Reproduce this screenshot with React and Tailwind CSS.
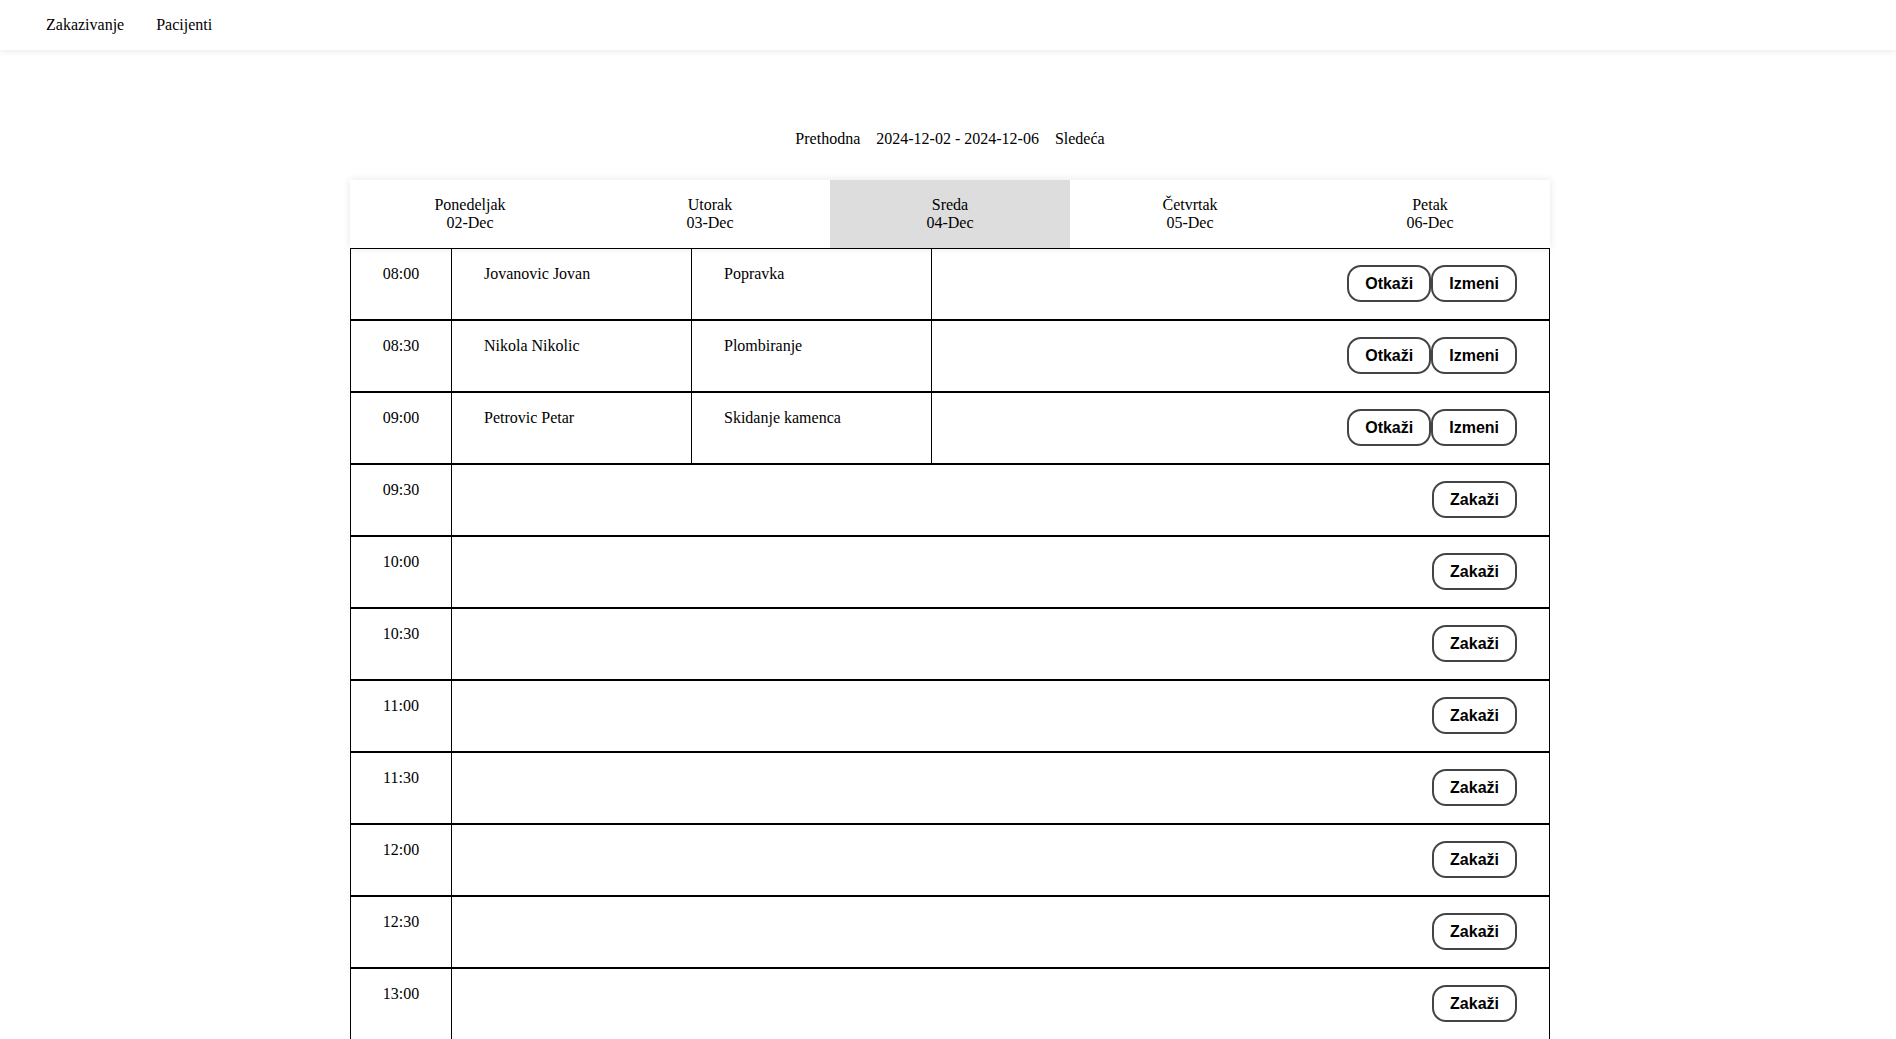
import { useState } from "react";

const days = [
  { name: "Ponedeljak", date: "02-Dec" },
  { name: "Utorak", date: "03-Dec" },
  { name: "Sreda", date: "04-Dec" },
  { name: "Četvrtak", date: "05-Dec" },
  { name: "Petak", date: "06-Dec" },
];

const appointments = {
  "08:00": { patient: "Jovanovic Jovan", service: "Popravka" },
  "08:30": { patient: "Nikola Nikolic", service: "Plombiranje" },
  "09:00": { patient: "Petrovic Petar", service: "Skidanje kamenca" },
};

const slots = [];
for (let h = 8; h < 16; h++) {
  const hh = String(h).padStart(2, "0");
  slots.push(`${hh}:00`, `${hh}:30`);
}

function Btn({ children }) {
  return (
    <button className="bg-white text-black font-bold text-[16px] leading-[19px] px-4 py-[7px] border-2 border-[#444] rounded-[14px] font-['Liberation_Sans',Arial,sans-serif]">
      {children}
    </button>
  );
}

function Row({ time }) {
  const appt = appointments[time];
  return (
    <div className="flex border border-black h-[72px]">
      <div className="w-[101px] shrink-0 border-r border-black pt-4 text-center">
        {time}
      </div>
      {appt ? (
        <>
          <div className="w-[240px] shrink-0 border-r border-black pt-4 pl-8">
            {appt.patient}
          </div>
          <div className="w-[240px] shrink-0 border-r border-black pt-4 pl-8">
            {appt.service}
          </div>
          <div className="flex-1 flex items-start justify-end pt-[16px] pr-[32px]">
            <Btn>Otkaži</Btn>
            <Btn>Izmeni</Btn>
          </div>
        </>
      ) : (
        <div className="flex-1 flex items-start justify-end pt-[16px] pr-[32px]">
          <Btn>Zakaži</Btn>
        </div>
      )}
    </div>
  );
}

export default function App() {
  const [selected] = useState(2);

  return (
    <div className="min-h-screen bg-white text-black text-[16px] leading-[18px] font-['Liberation_Serif','Times_New_Roman',serif]">
      <nav className="h-[50px] flex items-center gap-8 pl-[46px] shadow-[0_2px_6px_rgba(0,0,0,0.08)]">
        <a href="#">Zakazivanje</a>
        <a href="#">Pacijenti</a>
      </nav>

      <div className="pl-1">
        <div className="mt-20 flex justify-center gap-4">
          <a href="#">Prethodna</a>
          <span>2024-12-02 - 2024-12-06</span>
          <a href="#">Sledeća</a>
        </div>

        <div className="w-[1200px] mx-auto mt-8 pb-10">
          <div className="grid grid-cols-5 shadow-[0_0_8px_rgba(0,0,0,0.1)]">
            {days.map((d, i) => (
              <div
                key={d.name}
                className={`py-4 text-center h-[68px] ${i === selected ? "bg-[#dddddd]" : "bg-white"}`}
              >
                <div>{d.name}</div>
                <div>{d.date}</div>
              </div>
            ))}
          </div>
          {slots.map((t) => (
            <Row key={t} time={t} />
          ))}
        </div>
      </div>
    </div>
  );
}
